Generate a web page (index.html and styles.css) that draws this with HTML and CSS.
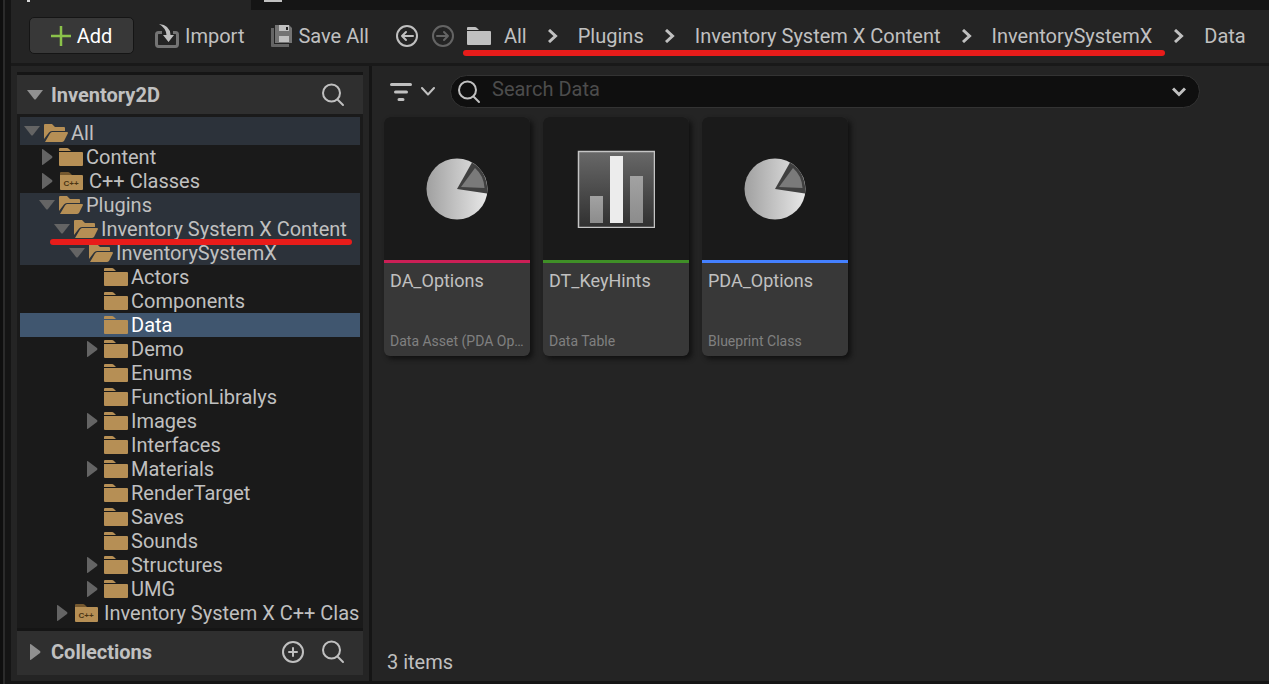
FILE: index.html
```html
<!DOCTYPE html>
<html lang="en">
<head>
<meta charset="utf-8">
<title>Content Browser</title>
<link rel="stylesheet" href="styles.css">
</head>
<body>
<svg class="defs" aria-hidden="true">
  <defs>
    <linearGradient id="pie" x1="0" x2="1" y1="0" y2="0"><stop offset="0" stop-color="#a0a0a0"/><stop offset="1" stop-color="#e8e8e8"/></linearGradient>
    <linearGradient id="panel" x1="0" x2="0" y1="0" y2="1"><stop offset="0" stop-color="#686868"/><stop offset="1" stop-color="#303030"/></linearGradient>
    <linearGradient id="bar" x1="0" x2="0" y1="0" y2="1"><stop offset="0" stop-color="#a2a2a2"/><stop offset="1" stop-color="#8c8c8c"/></linearGradient>
  </defs>
  <symbol id="folder" viewBox="0 0 24 18"><path d="M0 3V1Q0 0 1 0H8Q9 0 10 1L12 3ZM0 4H23Q24 4 24 5V17Q24 18 23 18H1Q0 18 0 17Z"/></symbol>
  <symbol id="folder-open" viewBox="0 0 24 18"><path d="M0 15V1Q0 0 1 0H8L11 3H20Q21 3 21 4V7H8Q6 7 5 8.500ZM1 18L6 9.500Q7 8 8 8H23Q24 8 24 9L20 17Q19 18 18 18Z"/></symbol>
  <symbol id="folder-cpp" viewBox="0 0 24 18"><path d="M1 3V1Q1 0 2 0H9Q10 0 11 1L13 3Z" fill="#75582f"/><path d="M1 3H23Q24 3 24 4V17Q24 18 23 18H2Q1 18 1 17Z"/><text x="12" y="14" text-anchor="middle" class="cpp">C++</text></symbol>
  <symbol id="down" viewBox="0 0 20 16"><path d="M2 3H18L11 12Q10 13 9 12Z"/></symbol>
  <symbol id="right" viewBox="0 0 20 16"><path d="M5 0Q6 0 7 1L15 7Q16 8 15 9L7 15Q6 16 5 16Z"/></symbol>
  <symbol id="search" viewBox="0 0 24 24"><g fill="none" stroke="currentColor" stroke-width="2" stroke-linecap="round"><circle cx="10.500" cy="10" r="8.500"/><path d="M17 17L22 22"/></g></symbol>
  <symbol id="chev" viewBox="0 0 10 14"><path d="M1 1L7.500 7L1 13" fill="none" stroke="currentColor" stroke-width="3"/></symbol>
  <symbol id="pie-icon" viewBox="0 0 62 62"><circle cx="31" cy="31" r="30.500" fill="url(#pie)"/><path d="M31 31L46 4.500A30.500 30.500 0 0 1 61 35.500Z" fill="#404040"/><path d="M35 29L49 10Q58 18 58.500 30Z" fill="#7a7a7a"/></symbol>
</svg>
<div class="window">
  <div class="tabs"><div class="tab-active"></div><div class="tab-next"></div></div>
  <header class="toolbar">
    <button class="add"><svg width="20" height="20" viewBox="0 0 20 20"><path d="M10 0V20M0 10H20" stroke="#8bc24a" stroke-width="2.500"/></svg>Add</button>
    <button class="tool"><svg width="24" height="24" viewBox="0 0 24 24"><path d="M7 8.500H3.500Q1.500 8.500 1.500 10.500V20Q1.500 22.500 3.500 22.500H20.500Q22.500 22.500 22.500 20V10.500Q22.500 8.500 20.500 8.500H18" fill="none" stroke="#747474" stroke-width="3"/><path d="M4 0Q15 1 15.500 11H19L13.500 18L8 11H11.500Q11 4 4 0Z"/></svg>Import</button>
    <button class="tool save"><svg width="21" height="22" viewBox="0 0 21 22"><path d="M0 3H3V19H18V22H1Q0 22 0 21Z" fill="#656565"/><path d="M4 0H18L21 3V18H4Z" fill="#747474"/><path d="M8 0H18V6H8ZM8 11H18V17H8Z"/><path d="M15 2H17V5H15Z" fill="#222"/></svg>Save All</button>
    <div class="history">
      <button aria-label="Back"><svg width="24" height="24" viewBox="0 0 24 24" class="line"><circle cx="12" cy="12" r="10"/><path d="M18 12H7M11 8L7 12L11 16"/></svg></button>
      <button aria-label="Forward" disabled><svg width="24" height="24" viewBox="0 0 24 24" class="line"><circle cx="12" cy="12" r="10"/><path d="M6 12H17M13 8L17 12L13 16"/></svg></button>
    </div>
    <nav class="crumbs" aria-label="Path">
      <div class="marked">
        <svg width="24" height="18"><use href="#folder"/></svg>
        <a href="#all">All</a><svg class="sep" width="10" height="14"><use href="#chev"/></svg>
        <a href="#plugins">Plugins</a><svg class="sep" width="10" height="14"><use href="#chev"/></svg>
        <a href="#content">Inventory System X Content</a><svg class="sep" width="10" height="14"><use href="#chev"/></svg>
        <a href="#isx">InventorySystemX</a>
      </div>
      <svg class="sep" width="10" height="14"><use href="#chev"/></svg>
      <a href="#data">Data</a>
    </nav>
  </header>
  <div class="body">
    <aside class="sidebar">
      <div class="section">
        <svg class="arrow" width="20" height="16"><use href="#down"/></svg><h2>Inventory2D</h2>
        <button aria-label="Search folders"><svg width="24" height="24"><use href="#search"/></svg></button>
      </div>
      <ul class="tree">
        <li class="row root open"><svg class="arrow" width="20" height="16"><use href="#down"/></svg><svg class="icon" width="24" height="18"><use href="#folder-open"/></svg><a href="#all">All</a></li>
        <li class="row l1"><svg class="arrow" width="20" height="16"><use href="#right"/></svg><svg class="icon" width="24" height="18"><use href="#folder"/></svg><a href="#c">Content</a></li>
        <li class="row l1 code"><svg class="arrow" width="20" height="16"><use href="#right"/></svg><svg class="icon" width="24" height="18"><use href="#folder-cpp"/></svg><a href="#cpp">C++ Classes</a></li>
        <li class="row l1 open"><svg class="arrow" width="20" height="16"><use href="#down"/></svg><svg class="icon" width="24" height="18"><use href="#folder-open"/></svg><a href="#plugins">Plugins</a></li>
        <li class="row l2 open underlined"><svg class="arrow" width="20" height="16"><use href="#down"/></svg><svg class="icon" width="24" height="18"><use href="#folder-open"/></svg><a href="#content">Inventory System X Content</a></li>
        <li class="row l3 open"><svg class="arrow" width="20" height="16"><use href="#down"/></svg><svg class="icon" width="24" height="18"><use href="#folder-open"/></svg><a href="#isx">InventorySystemX</a></li>
        <li class="row l4"><span class="arrow"></span><svg class="icon" width="24" height="18"><use href="#folder"/></svg><a href="#actors">Actors</a></li>
        <li class="row l4"><span class="arrow"></span><svg class="icon" width="24" height="18"><use href="#folder"/></svg><a href="#components">Components</a></li>
        <li class="row l4 selected"><span class="arrow"></span><svg class="icon" width="24" height="18"><use href="#folder"/></svg><a href="#data">Data</a></li>
        <li class="row l4"><svg class="arrow" width="20" height="16"><use href="#right"/></svg><svg class="icon" width="24" height="18"><use href="#folder"/></svg><a href="#demo">Demo</a></li>
        <li class="row l4"><span class="arrow"></span><svg class="icon" width="24" height="18"><use href="#folder"/></svg><a href="#enums">Enums</a></li>
        <li class="row l4"><span class="arrow"></span><svg class="icon" width="24" height="18"><use href="#folder"/></svg><a href="#fl">FunctionLibralys</a></li>
        <li class="row l4"><svg class="arrow" width="20" height="16"><use href="#right"/></svg><svg class="icon" width="24" height="18"><use href="#folder"/></svg><a href="#images">Images</a></li>
        <li class="row l4"><span class="arrow"></span><svg class="icon" width="24" height="18"><use href="#folder"/></svg><a href="#interfaces">Interfaces</a></li>
        <li class="row l4"><svg class="arrow" width="20" height="16"><use href="#right"/></svg><svg class="icon" width="24" height="18"><use href="#folder"/></svg><a href="#materials">Materials</a></li>
        <li class="row l4"><span class="arrow"></span><svg class="icon" width="24" height="18"><use href="#folder"/></svg><a href="#rt">RenderTarget</a></li>
        <li class="row l4"><span class="arrow"></span><svg class="icon" width="24" height="18"><use href="#folder"/></svg><a href="#saves">Saves</a></li>
        <li class="row l4"><span class="arrow"></span><svg class="icon" width="24" height="18"><use href="#folder"/></svg><a href="#sounds">Sounds</a></li>
        <li class="row l4"><svg class="arrow" width="20" height="16"><use href="#right"/></svg><svg class="icon" width="24" height="18"><use href="#folder"/></svg><a href="#structures">Structures</a></li>
        <li class="row l4"><svg class="arrow" width="20" height="16"><use href="#right"/></svg><svg class="icon" width="24" height="18"><use href="#folder"/></svg><a href="#umg">UMG</a></li>
        <li class="row l2 code"><svg class="arrow" width="20" height="16"><use href="#right"/></svg><svg class="icon" width="24" height="18"><use href="#folder-cpp"/></svg><a href="#isxcpp">Inventory System X C++ Clas</a></li>
      </ul>
      <div class="section collections">
        <svg class="arrow" width="20" height="16"><use href="#right"/></svg><h2>Collections</h2>
        <button aria-label="Add collection"><svg width="24" height="24" viewBox="0 0 24 24" class="line"><circle cx="12" cy="12" r="10"/><path d="M12 8V16M8 12H16"/></svg></button>
        <button aria-label="Search collections"><svg width="24" height="24"><use href="#search"/></svg></button>
      </div>
    </aside>
    <main class="content">
      <div class="filterbar">
        <button class="filter" aria-label="Filters">
          <svg width="22" height="18" viewBox="0 0 22 18" class="lines"><path d="M1.500 1.500H20.500M5.500 9H16.500M9 16.500H13"/></svg>
          <svg width="14" height="9" viewBox="0 0 14 9" class="line"><path d="M1 1L7 7.500L13 1"/></svg>
        </button>
        <div class="searchbox">
          <svg width="24" height="24"><use href="#search"/></svg>
          <input type="text" aria-label="Search Data" placeholder="Search Data">
          <button aria-label="Search options"><svg width="14" height="10" viewBox="0 0 14 10"><path d="M1 1.500L7 7.500L13 1.500" fill="none" stroke="currentColor" stroke-width="3"/></svg></button>
        </div>
      </div>
      <div class="tiles">
        <article class="tile asset"><div class="thumb"><svg width="62" height="62"><use href="#pie-icon"/></svg></div><div class="info"><h3>DA_Options</h3><p>Data Asset (PDA Op…</p></div></article>
        <article class="tile table"><div class="thumb"><svg width="78" height="78" viewBox="0 0 78 78"><rect x="1.500" y="1.500" width="76" height="76" fill="url(#panel)" stroke="#c4c4c4" stroke-width="1.500"/><rect x="13" y="46" width="13" height="27" fill="url(#bar)"/><rect x="33" y="6" width="13" height="67" fill="#ececec"/><rect x="53" y="26" width="13" height="47" fill="url(#bar)"/></svg></div><div class="info"><h3>DT_KeyHints</h3><p>Data Table</p></div></article>
        <article class="tile blueprint"><div class="thumb"><svg width="62" height="62"><use href="#pie-icon"/></svg></div><div class="info"><h3>PDA_Options</h3><p>Blueprint Class</p></div></article>
      </div>
      <footer class="status">3 items</footer>
    </main>
  </div>
</div>
</body>
</html>
```

FILE: styles.css
```css
* { box-sizing: border-box; }
body {
  margin: 0;
  min-height: 100vh;
  display: flex;
  background: #151515;
  color: #c0c0c0;
  font: 20px/24px Roboto, sans-serif;
  fill: #c0c0c0;
}
body::before {
  content: "";
  width: 3px;
  flex: none;
  background: #0f0f0f;
  border-right: 2px solid #2b2b2b;
}
svg { display: block; flex: none; }
.defs { position: absolute; width: 0; height: 0; }
h2, h3, p, ul { margin: 0; padding: 0; }
a { color: inherit; text-decoration: none; white-space: nowrap; }
button { font: inherit; color: inherit; fill: inherit; background: none; border: 0; padding: 0; white-space: nowrap; display: flex; align-items: center; }
.line, .lines { fill: none; stroke: currentColor; stroke-width: 2; stroke-linecap: round; stroke-linejoin: round; }
.lines { stroke-width: 3; }
.cpp { font: bold 8px "Liberation Sans", sans-serif; fill: #4a3413; }

.window { flex: 1; min-width: 0; padding: 0 0 3px 6px; display: flex; flex-direction: column; }
.tabs { height: 10px; display: flex; gap: 13px; }
.tab-active { width: 240px; background: #242424; padding-left: 16px; }
.tab-active::before { content: ""; display: block; width: 3px; height: 2px; background: #d8d8d8; }
.tab-next { width: 18px; height: 2px; background: #c0c0c0; }

.toolbar { background: #242424; height: 56px; border-bottom: 3px solid #191919; padding: 0 0 2px 18px; display: flex; align-items: center; }
.add { width: 105px; height: 37px; justify-content: center; gap: 6px; color: #fff; background: #383838; border: 1px solid #151515; border-radius: 5px; }
.tool { gap: 6px; margin-left: 21px; }
.save { margin-left: 27px; }
.history { display: flex; gap: 12px; margin-left: 26px; }
.history button:disabled { color: #646464; }
.crumbs { display: flex; align-items: center; margin-left: 8px; }
.marked { position: relative; display: flex; align-items: center; padding: 0 13px 0 4px; }
.marked a:first-of-type { margin-left: 13px; }
.marked .sep { margin: 0 20px 0 21px; }
.crumbs > .sep { margin: 0 20px 0 9px; }
.marked::after { content: ""; position: absolute; left: 0; right: 0; bottom: -8px; height: 6px; border-radius: 3px; background: #e81c1a; }

.body { flex: 1; display: flex; background: #242424; }
.sidebar { width: 361px; flex: none; padding: 6px; border-right: 3px solid #151515; display: flex; flex-direction: column; }
.section { display: flex; align-items: center; height: 42px; padding: 0 18px 0 8px; background: #2f2f2f; border-top: 3px solid #151515; fill: #909090; }
.section h2 { flex: 1; font-size: 20px; line-height: 24px; margin-left: 6px; }
.section button + button { margin-left: 16px; }
.collections { height: 47px; padding-bottom: 2px; }
.tree { flex: 1; list-style: none; background: #1a1a1a; padding: 3px; }
.row { position: relative; height: 24px; display: flex; align-items: center; padding-left: 2px; }
.row .icon { fill: #b68f55; margin: 0 3px 0 2px; }
.row .arrow { width: 20px; flex: none; fill: #646464; }
.code .icon { margin-right: 6px; }
.root { height: 28px; }
.root .icon, .root a { margin-top: 4px; }
.open { background: #2c323a; }
.selected { background: #40566f; color: #fff; }
.l1 { padding-left: 17px; }
.l2 { padding-left: 32px; }
.l3 { padding-left: 47px; }
.l4 { padding-left: 62px; }
.underlined { z-index: 1; }
.underlined::after { content: ""; position: absolute; left: 30px; right: 8px; bottom: -4px; height: 6px; border-radius: 3px; background: #e81c1a; }

.content { flex: 1; min-width: 0; padding: 9px 12px 7px; display: flex; flex-direction: column; }
.filterbar { display: flex; align-items: center; margin-right: 57px; }
.filter { gap: 9px; margin: 0 15px 0 6px; }
.searchbox { flex: 1; height: 33px; display: flex; align-items: center; gap: 11px; padding: 0 13px 0 6px; background: #0f0f0f; border: 1px solid #333; border-radius: 17px; }
.searchbox input { flex: 1; min-width: 0; height: 28px; font: inherit; color: inherit; background: none; border: 0; outline: 0; padding: 0 0 6px; }
.searchbox input::placeholder { color: #4c4c4c; opacity: 1; }
.tiles { display: flex; flex-wrap: wrap; gap: 13px; margin-top: 9px; }
.tile { width: 146px; border-radius: 6px; overflow: hidden; background: #383838; box-shadow: 3px 3px 5px #111; }
.thumb { height: 146px; display: flex; align-items: center; justify-content: center; background: #1a1a1a; border-bottom: 3px solid; }
.asset .thumb { border-color: #cb1f56; }
.table .thumb { border-color: #3f8f27; }
.blueprint .thumb { border-color: #4480ff; }
.info { height: 93px; padding: 6px; display: flex; flex-direction: column; justify-content: space-between; }
.info h3 { font-weight: 400; font-size: 18px; line-height: 24px; }
.info p { font-size: 14px; line-height: 18px; color: #808080; white-space: nowrap; }
.status { margin-top: auto; padding-left: 3px; }
```
